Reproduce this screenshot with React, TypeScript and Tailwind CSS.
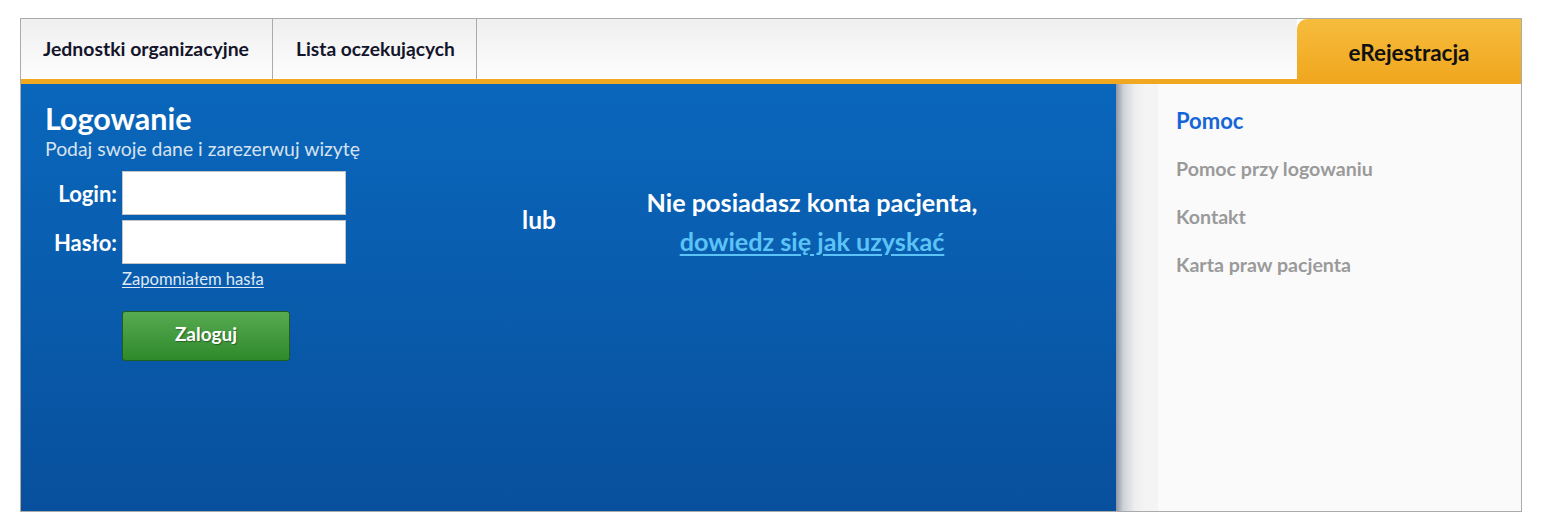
import React from 'react';

const font = { fontFamily: 'Lato, "Open Sans", sans-serif' };

const App = () => {
    return (
        <div className="min-h-[523px] w-[1541px] bg-white pt-[18px] pl-[20px]" style={font}>
            <div className="w-[1502px] border border-[#ababab]">
                {/* Top navigation */}
                <div className="flex h-[65px]">
                    <div className="flex flex-1 border-b-[5px] border-[#f0a820] bg-[linear-gradient(to_bottom,#efefef,#fdfdfd)]">
                        <a className="flex w-[252px] items-center border-r border-[#ababab] pl-[22px] text-[19.4px] font-bold text-[#14142b]">
                            Jednostki organizacyjne
                        </a>
                        <a className="flex w-[204px] items-center border-r border-[#ababab] pl-[23px] text-[19.2px] font-bold text-[#14142b]">
                            Lista oczekujących
                        </a>
                    </div>
                    <div className="flex w-[224px] items-center justify-center rounded-tl-[10px] bg-[linear-gradient(to_bottom,#f6bc3c,#f0a61e)] pt-[2px] text-[22.5px] font-bold text-[#111]">
                        eRejestracja
                    </div>
                </div>

                {/* Content */}
                <div className="flex h-[427px]">
                    <div className="flex w-[1095px] bg-[linear-gradient(to_bottom,#0a67bc,#08509d)] text-white">
                        {/* Login form */}
                        <div className="ml-[24px] w-[300px] pt-[16px]">
                            <h1 className="text-[30.5px] leading-[36px] font-bold">Logowanie</h1>
                            <p className="text-[19.4px] leading-[26px] whitespace-nowrap text-[#d6e2f0]">Podaj swoje dane i zarezerwuj wizytę</p>

                            <div className="mt-[9px] grid grid-cols-[72px_224px] gap-x-[5px] gap-y-[5px]">
                                <label className="flex items-center justify-end text-[22px] font-bold">Login:</label>
                                <input type="text" className="h-[44px] border border-[#c4c4c4] bg-white" />
                                <label className="flex items-center justify-end text-[22px] font-bold">Hasło:</label>
                                <input type="password" className="h-[44px] border border-[#c4c4c4] bg-white" />
                                <div />
                                <a className="mt-0 text-[16.6px] leading-[20px] text-[#dfe8f3] underline underline-offset-2">Zapomniałem hasła</a>
                                <div />
                                <button
                                    type="button"
                                    className="mt-[17px] h-[50px] w-[168px] rounded-[3px] border border-[#1f5e1c] bg-[linear-gradient(to_bottom,#57aa51,#2f8a2b)] pb-[4px] text-[19px] font-bold text-white [text-shadow:1px_1px_1px_rgba(0,0,0,0.35)]"
                                >
                                    Zaloguj
                                </button>
                            </div>
                        </div>

                        {/* lub */}
                        <div className="ml-[154px] w-[80px] pt-[118px] text-center text-[24.5px] leading-[36px] font-bold">lub</div>

                        {/* Register info */}
                        <div className="ml-[33px] w-[400px] pt-[99px] text-center text-[25.2px] leading-[39px] font-bold">
                            <p>Nie posiadasz konta pacjenta,</p>
                            <a className="text-[#5cc3f7] underline underline-offset-[3px]">dowiedz się jak uzyskać</a>
                        </div>
                    </div>

                    {/* Shadow */}
                    <div className="w-[42px] bg-[linear-gradient(to_right,#8e96a4_0%,#cfd3d9_18%,#eceeef_45%,#f4f4f4_70%,#f4f4f4_100%)]" />

                    {/* Help panel */}
                    <div className="flex-1 bg-[#fafafa] pl-[18px] pt-[23px]">
                        <h2 className="text-[22px] leading-[28px] font-bold text-[#1565d8]">Pomoc</h2>
                        <ul className="mt-[20px] grid gap-[20px] text-[19.6px] leading-[28px] font-bold text-[#9a9a9a]">
                            <li>Pomoc przy logowaniu</li>
                            <li>Kontakt</li>
                            <li>Karta praw pacjenta</li>
                        </ul>
                    </div>
                </div>
            </div>
        </div>
    );
};

export default App;
